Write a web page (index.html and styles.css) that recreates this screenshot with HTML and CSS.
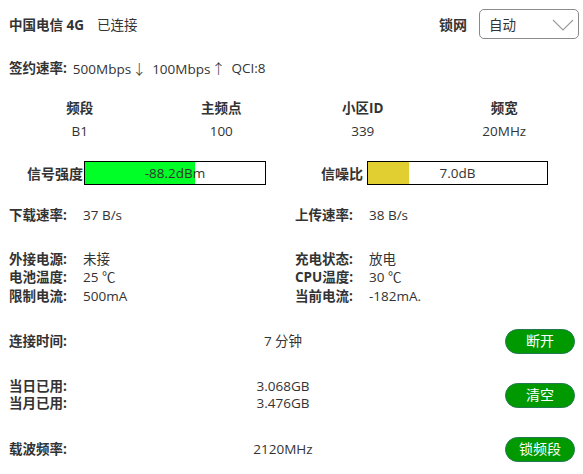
FILE: index.html
```html
<!DOCTYPE html>
<html lang="zh">
<head>
<meta charset="utf-8">
<link rel="stylesheet" href="styles.css">
</head>
<body>
<div class="page">
  <div class="top">
    <div class="carrier"><b>中国电信 4G</b><span class="status">已连接</span></div>
    <div class="lock">
      <span class="lock-label">锁网</span>
      <div class="select"><span>自动</span>
        <svg class="chev" width="22" height="12" viewBox="0 0 22 12"><path d="M1 1 L11 11 L21 1" fill="none" stroke="#9a9a9a" stroke-width="1.1"/></svg>
      </div>
    </div>
  </div>
  <div class="rate"><b>签约速率:</b><span class="rv">500Mbps<span class="arrow">↓</span></span><span class="rv">100Mbps<span class="arrow">↑</span></span><span class="rv">QCI:8</span></div>

  <div class="cells">
    <div class="cell"><b>频段</b><span>B1</span></div>
    <div class="cell"><b>主频点</b><span>100</span></div>
    <div class="cell"><b>小区ID</b><span>339</span></div>
    <div class="cell"><b>频宽</b><span>20MHz</span></div>
  </div>

  <div class="bars">
    <div class="meter meter-signal">
      <b class="meter-label">信号强度</b>
      <div class="bar"><div class="fill green" style="width:61%"></div><span class="bar-text">-88.2dBm</span></div>
    </div>
    <div class="meter meter-snr">
      <b class="meter-label">信噪比</b>
      <div class="bar"><div class="fill yellow" style="width:23%"></div><span class="bar-text">7.0dB</span></div>
    </div>
  </div>

  <div class="kv speed">
    <div class="pair"><b>下载速率:</b><span>37 B/s</span></div>
    <div class="pair"><b>上传速率:</b><span>38 B/s</span></div>
  </div>

  <div class="kv power">
    <div class="pair"><b>外接电源:</b><span>未接</span></div>
    <div class="pair"><b>充电状态:</b><span>放电</span></div>
    <div class="pair"><b>电池温度:</b><span>25 ℃</span></div>
    <div class="pair"><b>CPU温度:</b><span>30 ℃</span></div>
    <div class="pair"><b>限制电流:</b><span>500mA</span></div>
    <div class="pair"><b>当前电流:</b><span>-182mA.</span></div>
  </div>

  <div class="actions">
    <div class="action">
      <div class="a-label"><b>连接时间:</b></div>
      <div class="a-value">7 分钟</div>
      <button class="btn">断开</button>
    </div>
    <div class="action">
      <div class="a-label"><b>当日已用:</b><b>当月已用:</b></div>
      <div class="a-value"><span>3.068GB</span><span>3.476GB</span></div>
      <button class="btn">清空</button>
    </div>
    <div class="action">
      <div class="a-label"><b>载波频率:</b></div>
      <div class="a-value">2120MHz</div>
      <button class="btn">锁频段</button>
    </div>
  </div>
</div>
</body>
</html>
```

FILE: styles.css
```css
* { box-sizing: border-box; }
html, body { margin: 0; padding: 0; background: #fff; }
body {
  font-family: "Open Sans", "Noto Sans CJK SC", sans-serif;
  font-size: 13.5px;
  color: #333;
  width: 583px;
  height: 474px;
  overflow: hidden;
}
b { font-weight: 700; color: #333; }
.page { padding: 0 8px 0 9px; }

.top {
  height: 48px;
  display: flex;
  align-items: center;
  justify-content: space-between;
}
.status { margin-left: 13px; }
.lock { display: flex; align-items: center; gap: 12px; margin-right: -4px; }
.lock-label { font-weight: 700; font-size: 14px; }
.select {
  width: 100px;
  height: 30px;
  border: 1px solid #8a8a8a;
  border-radius: 5px;
  display: flex;
  align-items: center;
  justify-content: space-between;
  padding: 0 4px 0 9px;
}
.chev { display: block; margin-top: 1px; }

.rate { height: 20px; line-height: 20px; margin-top: 10px; display: flex; }
.rate b { margin-right: 6px; }
.rv { margin-right: 6px; }
.arrow {
  font-family: "Noto Sans CJK SC", sans-serif;
  font-size: 14px;
  font-weight: 300;
  margin-left: 1px;
}

.cells {
  display: grid;
  grid-template-columns: repeat(4, 1fr);
  margin-top: 19px;
}
.cell {
  display: flex;
  flex-direction: column;
  align-items: center;
  line-height: 23px;
}

.bars {
  display: flex;
  margin-top: 18px;
}
.meter { display: flex; align-items: center; }
.meter-label { font-size: 14px; }
.meter-signal { margin-left: 18px; }
.meter-signal .meter-label { margin-right: 1px; }
.meter-snr { margin-left: 55px; }
.meter-snr .meter-label { margin-right: 4px; }
.bar {
  position: relative;
  width: 182px;
  height: 24px;
  border: 1px solid #000;
  background: #fff;
}
.meter-snr .bar { width: 181px; }
.fill { height: 100%; }
.green { background: #00ff26; }
.yellow { background: #e1cf32; }
.bar-text {
  position: absolute;
  inset: 0;
  display: flex;
  align-items: center;
  justify-content: center;
  color: #333;
}

.kv {
  display: grid;
  grid-template-columns: 286px 1fr;
}
.pair { display: flex; line-height: 18.5px; }
.pair b { width: 74px; flex: none; }
.speed { margin-top: 21px; }
.power { margin-top: 25px; }

.actions { margin-top: 9px; }
.action {
  height: 54px;
  display: grid;
  grid-template-columns: 200px 148px 1fr;
  align-items: center;
}
.a-label, .a-value { display: flex; flex-direction: column; line-height: 17px; }
.a-value { align-items: center; }
.btn {
  justify-self: end;
  width: 70px;
  height: 25px;
  border-radius: 13px;
  border: 1px solid #237a52;
  background: #009900;
  color: #fff;
  font-family: "Open Sans", "Noto Sans CJK SC", sans-serif;
  font-size: 14px;
  line-height: 20px;
  padding: 0;
}
```
